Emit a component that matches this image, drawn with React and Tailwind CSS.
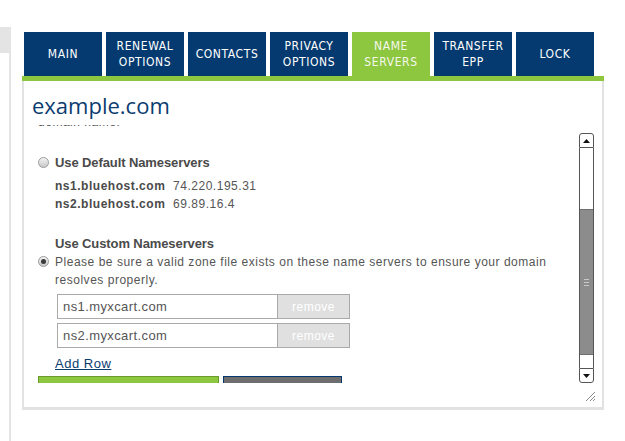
import React from "react";

const tabs = [
  ["MAIN"],
  ["RENEWAL", "OPTIONS"],
  ["CONTACTS"],
  ["PRIVACY", "OPTIONS"],
  ["NAME", "SERVERS"],
  ["TRANSFER", "EPP"],
  ["LOCK"],
];

const Radio = ({ checked }) => (
  <span className="mt-[3px] flex h-[11px] w-[11px] items-center justify-center rounded-full border border-[#9a9a9a] bg-gradient-to-b from-[#f4f4f4] to-[#c9c9c9]">
    {checked && <span className="h-[5px] w-[5px] rounded-full bg-[#3a3a3a]" />}
  </span>
);

const NsInput = ({ value }) => (
  <div className="flex h-[25px]">
    <div className="flex w-[221px] items-center border border-[#aaaaaa] bg-white px-[5px] text-[13px] tracking-[0.4px] text-[#555]">
      {value}
    </div>
    <div className="flex w-[72px] items-center justify-center border border-l-0 border-[#aaaaaa] bg-[#e0e0e0] text-[12px] tracking-[0.5px] text-white">
      remove
    </div>
  </div>
);

const Scrollbar = () => (
  <div className="mt-[8px] flex w-[15px] flex-col">
    <div className="flex h-[15px] items-center justify-center rounded-t-[3px] border border-[#555] bg-white">
      <svg width="7" height="4" viewBox="0 0 7 4">
        <path d="M0 4 L3.5 0 L7 4 Z" fill="#111" />
      </svg>
    </div>
    <div className="flex flex-1 flex-col border-x border-[#555] bg-white">
      <div className="h-[61px]" />
      <div className="flex h-[146px] flex-col items-center justify-center gap-[2px] border-y border-[#6f6f6f] bg-[#8c8c8c]">
        <span className="h-px w-[5px] bg-[#c8c8c8]" />
        <span className="h-px w-[5px] bg-[#c8c8c8]" />
        <span className="h-px w-[5px] bg-[#c8c8c8]" />
      </div>
      <div className="flex-1" />
    </div>
    <div className="flex h-[15px] items-center justify-center rounded-b-[3px] border border-[#555] bg-white">
      <svg width="7" height="4" viewBox="0 0 7 4">
        <path d="M0 0 L3.5 4 L7 0 Z" fill="#111" />
      </svg>
    </div>
  </div>
);

export default function App() {
  return (
    <div className="flex min-h-[441px] bg-white" style={{ fontFamily: '"Liberation Sans", Arial, sans-serif' }}>
      <div className="flex w-[11px] flex-col pt-[27px]">
        <div className="h-[26px] bg-[#e4e4e4]" />
        <div className="ml-[9px] w-[2px] flex-1 bg-[#e4e4e4]" />
      </div>

      <div className="ml-[11px] flex w-[582px] flex-col">
        <div className="mt-[32px] flex gap-[4px] pl-[2px]">
          {tabs.map((t) => {
            const active = t[0] === "NAME";
            return (
              <div
                key={t[0]}
                className={`flex h-[44px] w-[78px] flex-col items-center justify-center text-[12px] leading-[16px] tracking-[0.6px] ${
                  active ? "bg-[#8dc63f] text-[#f4f8ec]" : "bg-[#053a70] text-white"
                }`}
                style={{ fontFamily: '"DejaVu Sans Condensed", "Liberation Sans Narrow", "Roboto", sans-serif' }}
              >
                {t.map((line) => (
                  <span key={line}>{line}</span>
                ))}
              </div>
            );
          })}
        </div>
        <div className="h-[5px] bg-[#8dc63f]" />

        <div className="flex h-[329px] flex-col border-x-2 border-b-[3px] border-[#e2e2e2] bg-white">
          <h1
            className="pl-[8px] pt-[9px] text-[22px] leading-[30px] text-[#0b3c70]"
            style={{ fontFamily: '"Open Sans", sans-serif' }}
          >
            example.com
          </h1>

          <div className="ml-[13px] mr-[8px] mt-[5px] flex h-[258px]">
            <div className="flex-1 overflow-hidden text-[12px] leading-[18px] tracking-[0.52px] text-[#555]">
              <p className="-mt-[12px] pl-[1px]">domain name.</p>

              <div className="mt-[23px] flex gap-[6px] pl-[1px]">
                <Radio />
                <span className="text-[13px] font-bold tracking-[-0.1px] text-[#4a4a4a]">Use Default Nameservers</span>
              </div>
              <div className="mt-[5px] pl-[18px]">
                <div>
                  <b className="text-[#4a4a4a]">ns1.bluehost.com</b>&nbsp; 74.220.195.31
                </div>
                <div>
                  <b className="text-[#4a4a4a]">ns2.bluehost.com</b>&nbsp; 69.89.16.4
                </div>
              </div>

              <div className="mt-[22px] pl-[18px] text-[13px] font-bold tracking-[-0.1px] text-[#4a4a4a]">
                Use Custom Nameservers
              </div>
              <div className="flex gap-[6px] pl-[1px]">
                <Radio checked />
                <p className="w-[500px]">
                  Please be sure a valid zone file exists on these name servers to ensure your domain resolves properly.
                </p>
              </div>

              <div className="ml-[20px] mt-[5px] flex flex-col gap-[4px]">
                <NsInput value="ns1.myxcart.com" />
                <NsInput value="ns2.myxcart.com" />
              </div>

              <div className="mt-[7px] pl-[18px]">
                <a href="#" className="text-[13px] text-[#0b3c70] underline">
                  Add Row
                </a>
              </div>

              <div className="mt-[3px] flex gap-[4px] pl-[1px]">
                <div className="h-[30px] w-[181px] border border-[#6a9a2c] bg-[#8dc63f]" />
                <div className="h-[30px] w-[119px] border border-[#053a70] bg-[#6d6d70]" />
              </div>
            </div>
            <Scrollbar />
          </div>

          <div className="mr-[6px] mt-[8px] flex justify-end">
            <svg width="11" height="11" viewBox="0 0 11 11">
              <path d="M1 10 L10 1 M5 10 L10 5 M8 10 L10 8" stroke="#8a8a8a" strokeWidth="1" />
            </svg>
          </div>
        </div>
      </div>
    </div>
  );
}
